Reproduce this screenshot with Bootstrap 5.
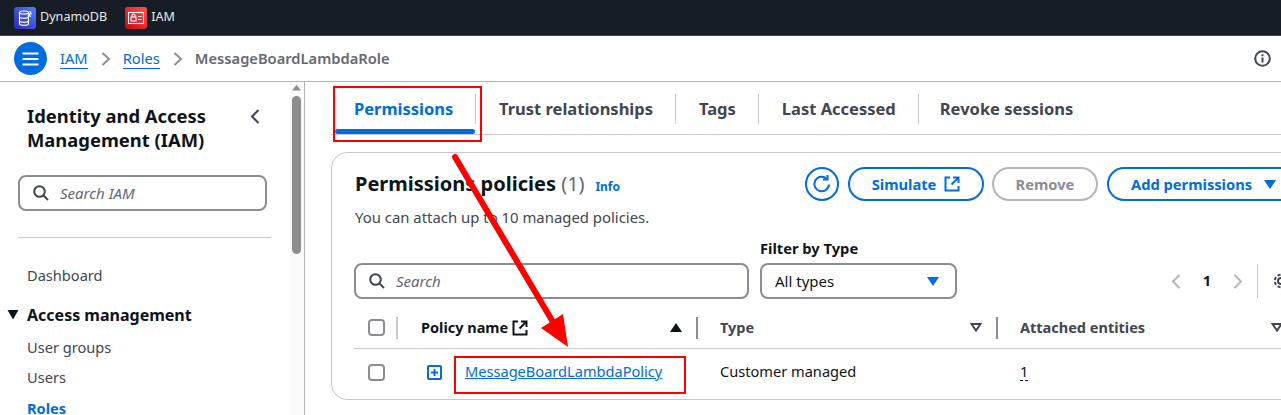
<!DOCTYPE html>
<html lang="en">
<head>
  <meta charset="UTF-8">
  <meta name="viewport" content="width=device-width, initial-scale=1.0">
  <title>MessageBoardLambdaRole | IAM</title>
  <link href="https://cdn.jsdelivr.net/npm/bootstrap@5.3.3/dist/css/bootstrap.min.css" rel="stylesheet">
  <style>
    html, body { height: 415px; overflow: hidden; }
    body { font-family: "Noto Sans", sans-serif; font-size: 14.6px; color: #0f141a; position: relative; background: #fff; }
    a { color: #006ce0; }
    .topbar { height: 36px; background: #161d26; border-bottom: 1px solid #424650; padding-left: 14px; color: #e8e8ea; font-size: 12.6px; }
    .svc { width: 22px; height: 22px; border-radius: 2px; }
    .crumbs { height: 46px; border-bottom: 1px solid #b4b4bb; padding: 0 10px 0 14px; font-size: 14.7px; }
    .menu-btn { width: 33px; height: 33px; border-radius: 50%; background: #006ce0; margin-right: 13px; }
    .crumb-link { line-height: 19px; text-decoration: none; border-bottom: 1px solid #006ce0; }
    .crumb-here { color: #656871; font-weight: 600; font-size: 14.7px; }
    .crumb-sep { margin: 0 12px 0 13px; }
    .shell { height: 333px; }
    .sidenav { width: 305px; border-right: 1px solid #b4b4bb; flex: none; overflow: hidden; }
    .sidenav-body { width: 290px; padding: 22px 0 0 18px; flex: none; }
    .sidenav-title { font-size: 18.4px; font-weight: 700; line-height: 24px; padding-left: 9px; width: 215px; }
    .sb-track { width: 14px; background: #fafafa; padding: 3px 3px 0 2px; flex: none; }
    .sb-thumb { width: 9px; height: 158px; background: #8d8d8d; border-radius: 5px; margin-top: 5px; }
    .field { border: 2px solid #8c8c94; border-radius: 8px; height: 36px; padding-left: 13px; background: #fff; }
    .field-hint { font-style: italic; color: #656871; font-size: 15px; margin-left: 11px; }
    .side-rule { border-top: 1px solid #c6c6cd; margin: 26px 19px 0 0; width: 253px; }
    .side-link { display: block; padding-left: 9px; color: #424650; font-size: 14.6px; line-height: 20px; }
    .side-head { font-size: 16px; font-weight: 700; line-height: 22px; margin: 19px 0 11px; position: relative; padding-left: 9px; }
    .side-caret { position: absolute; left: -11px; top: 6px; }
    .content { padding: 2px 0 0 26px; width: 1400px; flex: none; }
    .tabstrip { height: 51px; border-bottom: 1px solid #c6c6cd; width: 1000px; padding-left: 4px; }
    .tab-item { font-size: 16.5px; font-weight: 700; color: #424650; height: 30px; line-height: 30px; margin-top: 10px; border-right: 1px solid #c6c6cd; }
    .tab-on { color: #006ce0; position: relative; width: 141px; padding-left: 19px; }
    .tab-on::after { content: ""; position: absolute; left: 0; right: 0; top: 35px; height: 5px; background: #006ce0; border-radius: 3px; }
    .tab-plain { padding: 0 22px 0 23px; }
    .tab-last { border-right: 0; padding-left: 21px; }
    .policy-card { width: 1100px; height: 248px; margin-top: 17px; border: 1px solid #c6c6cd; border-radius: 16px; padding: 13px 0 0 22px; }
    .card-title-row { height: 36px; }
    .card-title-col { width: 451px; flex: none; padding-left: 1px; }
    .policy-title { font-size: 20px; font-weight: 700; line-height: 36px; }
    .policy-count { font-weight: 400; color: #656871; }
    .info-link { font-size: 12px; font-weight: 700; margin-left: 7px; text-decoration: none; }
    .pill { height: 34px; border: 2px solid #006ce0; border-radius: 20px; color: #006ce0; font-weight: 700; font-size: 14.7px; background: #fff; padding: 0; flex: none; }
    .pill-round { width: 34px; margin-right: 1px; }
    .pill-sim { width: 136px; }
    .pill-off { width: 106px; border-color: #b4b4bb; color: #8c8c94; margin-right: 1px; }
    .pill-add { width: 190px; padding-left: 22px; }
    .card-note { font-size: 14.9px; color: #424650; line-height: 20px; margin-top: 5px; padding-left: 1px; }
    .filter-row { margin-top: 11px; }
    .filter-label { font-weight: 700; font-size: 14.7px; line-height: 20px; margin-bottom: 5px; }
    .filter-search { width: 395px; margin-top: 25px; flex: none; }
    .filter-box { margin-left: 11px; flex: none; }
    .filter-select { width: 197px; justify-content: space-between; padding: 0 16px 0 13px; color: #0f141a; font-size: 15px; }
    .pager { margin: 25px 0 0 214px; height: 36px; flex: none; }
    .pager-num { font-weight: 700; width: 52px; text-align: center; }
    .pager-rule { width: 1px; height: 34px; background: #c6c6cd; margin: 0 15px 0 14px; }
    .grid-head { height: 50px; padding-top: 8px; border-bottom: 1px solid #c6c6cd; }
    .tick { width: 17px; height: 17px; border: 2px solid #8c8c94; border-radius: 4px; margin-left: 14px; flex: none; }
    .col-sep { width: 2px; height: 22px; background: #8c8c94; flex: none; }
    .col-sep-first { background: #c6c6cd; margin-left: 11px; }
    .head-cell { font-weight: 700; color: #424650; font-size: 14.5px; flex: none; justify-content: space-between; }
    .head-name { color: #0f141a; width: 298px; padding: 0 14px 0 23px; }
    .head-type { width: 298px; padding: 0 14px 0 22px; }
    .head-ent { width: 285px; padding: 0 0 0 22px; }
    .body-row { height: 49px; padding-bottom: 3px; }
    .plus-cell { margin-left: 42px; width: 38px; flex: none; }
    .policy-link { width: 255px; flex: none; }
    .ent-cell { line-height: 17px; border-bottom: 1px dashed #0f141a; }
    .type-cell { width: 300px; flex: none; }
    .markup { position: absolute; left: 0; top: 0; pointer-events: none; }
  </style>
</head>
<body>
  <div class="topbar d-flex align-items-center">
    <svg class="svc" viewBox="0 0 22 22"><defs><linearGradient id="ddb" x1="0" y1="1" x2="1" y2="0"><stop offset="0" stop-color="#2e27ad"/><stop offset="1" stop-color="#527fff"/></linearGradient></defs><rect width="22" height="22" rx="2" fill="url(#ddb)"/><g fill="none" stroke="#fff" stroke-width="1.2"><ellipse cx="10" cy="5.5" rx="4.5" ry="1.5"/><path d="M5.5 5.5v11c0 1 2 1.8 4.5 1.8s4.5-.8 4.5-1.8v-11M5.5 9.5c0 1 2 1.8 4.5 1.8s4.5-.8 4.5-1.8M5.5 13.5c0 1 2 1.8 4.5 1.8s4.5-.8 4.5-1.8M16 4l1 3h-2l1.500 3"/></g></svg>
    <span class="ms-1">DynamoDB</span>
    <svg class="svc" style="margin-left:18px" viewBox="0 0 22 22"><defs><linearGradient id="iam" x1="0" y1="1" x2="1" y2="0"><stop offset="0" stop-color="#bd0816"/><stop offset="1" stop-color="#ff5252"/></linearGradient></defs><rect width="22" height="22" rx="2" fill="url(#iam)"/><g fill="none" stroke="#fff" stroke-width="1.100"><rect x="3.500" y="5.500" width="15" height="11"/><rect x="6" y="10" width="5" height="4"/><path d="M7 10V8.500a1.500 1.500 0 0 1 3 0V10M13 9.500h3.500M13 12.500h3.500"/></g></svg>
    <span class="ms-1">IAM</span>
  </div>

  <div class="crumbs d-flex align-items-center">
    <button class="menu-btn border-0 p-0 d-flex align-items-center justify-content-center" aria-label="Menu">
      <svg width="17" height="14" viewBox="0 0 17 14" fill="none" stroke="#fff" stroke-width="2"><path d="M0.500 1.500h16M0.500 7h16M0.500 12.500h16"/></svg>
    </button>
    <a class="crumb-link" href="#">IAM</a>
    <svg class="crumb-sep" width="10" height="14" viewBox="0 0 10 14" fill="none" stroke="#8c8c94" stroke-width="2"><path d="M1.500 1l6.500 6-6.500 6"/></svg>
    <a class="crumb-link" href="#">Roles</a>
    <svg class="crumb-sep" width="10" height="14" viewBox="0 0 10 14" fill="none" stroke="#8c8c94" stroke-width="2"><path d="M1.500 1l6.500 6-6.500 6"/></svg>
    <span class="crumb-here">MessageBoardLambdaRole</span>
    <svg class="ms-auto" width="17" height="17" viewBox="0 0 17 17" fill="none" stroke="#424650" stroke-width="2"><circle cx="8.500" cy="8.500" r="7.300"/><path d="M8.500 7.500v5M8.500 4.200v2"/></svg>
  </div>

  <div class="shell d-flex overflow-hidden">
    <nav class="sidenav d-flex">
      <div class="sidenav-body">
        <div class="d-flex justify-content-between align-items-start">
          <div class="sidenav-title">Identity and Access Management (IAM)</div>
          <svg style="margin:5px 30px 0 0" width="10" height="15" viewBox="0 0 10 15" fill="none" stroke="#424650" stroke-width="2"><path d="M8.500 1L2 7.500 8.500 14"/></svg>
        </div>
        <div class="field d-flex align-items-center" style="width:249px;margin-top:23px">
          <svg width="16" height="16" viewBox="0 0 16 16" fill="none" stroke="#424650" stroke-width="2"><circle cx="6.500" cy="6.500" r="5.300"/><path d="M10.500 10.500l4.500 4.500"/></svg>
          <span class="field-hint">Search IAM</span>
        </div>
        <div class="side-rule"></div>
        <a class="side-link text-decoration-none" href="#" style="margin-top:27px">Dashboard</a>
        <div class="side-head">
          <svg class="side-caret" width="12" height="10" viewBox="0 0 12 10" fill="#0f141a"><path d="M0.500 0h11L6 9.500z"/></svg>
          Access management
        </div>
        <a class="side-link text-decoration-none" href="#">User groups</a>
        <a class="side-link text-decoration-none" href="#" style="margin-top:10px">Users</a>
        <a class="side-link text-decoration-none fw-bold" href="#" style="margin-top:11px;color:#006ce0">Roles</a>
      </div>
      <div class="sb-track">
        <svg class="d-block" width="9" height="6" viewBox="0 0 9 6" fill="#8d8d8d"><path d="M0 5.500L4.500 0 9 5.500z"/></svg>
        <div class="sb-thumb"></div>
      </div>
    </nav>

    <main class="content">
      <div class="tabstrip d-flex">
        <div class="tab-item tab-on">Permissions</div>
        <div class="tab-item tab-plain">Trust relationships</div>
        <div class="tab-item tab-plain">Tags</div>
        <div class="tab-item tab-plain">Last Accessed</div>
        <div class="tab-item tab-plain tab-last">Revoke sessions</div>
      </div>

      <section class="policy-card">
        <div class="card-title-row d-flex align-items-center">
          <div class="card-title-col">
            <span class="policy-title">Permissions policies <span class="policy-count">(1)</span></span>
            <a class="info-link" href="#">Info</a>
          </div>
          <div class="d-flex gap-2 align-items-center">
            <button class="pill pill-round d-flex align-items-center justify-content-center" aria-label="Refresh">
              <svg width="20" height="20" viewBox="0 0 20 20" fill="none" stroke="#006ce0" stroke-width="2"><path d="M17 10.500a7.300 7.300 0 1 1-2.500-6"/><path d="M15.500 1v4.500H11"/></svg>
            </button>
            <button class="pill pill-sim d-flex align-items-center justify-content-center gap-2">Simulate
              <svg width="16" height="16" viewBox="0 0 16 16" fill="none" stroke="#006ce0" stroke-width="2"><path d="M6 1.500H1.500v13h13V10M9 1.500h5.500V7M14.500 1.500L7.500 8.500"/></svg>
            </button>
            <button class="pill pill-off">Remove</button>
            <button class="pill pill-add d-flex align-items-center gap-2">Add permissions
              <svg class="ms-1" width="12" height="9" viewBox="0 0 12 9" fill="#006ce0"><path d="M0 0h12L6 9z"/></svg>
            </button>
          </div>
        </div>
        <div class="card-note">You can attach up to 10 managed policies.</div>

        <div class="filter-row d-flex">
          <div class="filter-search field d-flex align-items-center">
            <svg width="16" height="16" viewBox="0 0 16 16" fill="none" stroke="#424650" stroke-width="2"><circle cx="6.500" cy="6.500" r="5.300"/><path d="M10.500 10.500l4.500 4.500"/></svg>
            <span class="field-hint">Search</span>
          </div>
          <div class="filter-box">
            <div class="filter-label">Filter by Type</div>
            <div class="filter-select field d-flex align-items-center">
              <span>All types</span>
              <svg width="12" height="9" viewBox="0 0 12 9" fill="#006ce0"><path d="M0 0h12L6 9z"/></svg>
            </div>
          </div>
          <div class="pager d-flex align-items-center">
            <svg width="10" height="15" viewBox="0 0 10 15" fill="none" stroke="#b4b4bb" stroke-width="2"><path d="M8.500 1L2 7.500 8.500 14"/></svg>
            <span class="pager-num">1</span>
            <svg width="10" height="15" viewBox="0 0 10 15" fill="none" stroke="#b4b4bb" stroke-width="2"><path d="M1.500 1L8 7.500 1.500 14"/></svg>
            <span class="pager-rule"></span>
            <svg width="16" height="16" viewBox="0 0 16 16" fill="none" stroke="#424650" stroke-width="2"><circle cx="8" cy="8" r="3"/><circle cx="8" cy="8" r="6.200" stroke-dasharray="3 2"/></svg>
          </div>
        </div>

        <div class="grid-head d-flex align-items-center">
          <span class="tick"></span>
          <span class="col-sep col-sep-first"></span>
          <div class="head-cell head-name d-flex align-items-center">
            <span class="d-flex align-items-center gap-1">Policy name
              <svg width="16" height="16" viewBox="0 0 16 16" fill="none" stroke="#0f141a" stroke-width="2"><path d="M6 1.500H1.500v13h13V10M9 1.500h5.500V7M14.500 1.500L7.500 8.500"/></svg>
            </span>
            <svg width="12" height="9" viewBox="0 0 12 9" fill="#0f141a"><path d="M0 9h12L6 0z"/></svg>
          </div>
          <span class="col-sep"></span>
          <div class="head-cell head-type d-flex align-items-center">
            <span>Type</span>
            <svg width="12" height="9" viewBox="0 0 12 9" fill="none" stroke="#424650" stroke-width="2"><path d="M1.500 1h9L6 7.500z"/></svg>
          </div>
          <span class="col-sep"></span>
          <div class="head-cell head-ent d-flex align-items-center">
            <span>Attached entities</span>
            <svg width="12" height="9" viewBox="0 0 12 9" fill="none" stroke="#424650" stroke-width="2"><path d="M1.500 1h9L6 7.500z"/></svg>
          </div>
        </div>

        <div class="body-row d-flex align-items-center">
          <span class="tick"></span>
          <span class="plus-cell d-flex">
            <svg width="15" height="15" viewBox="0 0 15 15" fill="none" stroke="#006ce0" stroke-width="2"><rect x="1" y="1" width="13" height="13" rx="1"/><path d="M7.500 4v7M4 7.500h7"/></svg>
          </span>
          <a class="policy-link" href="#">MessageBoardLambdaPolicy</a>
          <span class="type-cell">Customer managed</span>
          <span class="ent-cell">1</span>
        </div>
      </section>
    </main>
  </div>

  <svg class="markup" width="1281" height="415" viewBox="0 0 1281 415" fill="none">
    <rect x="334" y="87" width="147" height="54" stroke="#f00" stroke-width="2"/>
    <rect x="455" y="357" width="230" height="36" stroke="#f00" stroke-width="2"/>
    <path d="M455 157L553 322" stroke="#f00" stroke-width="6" stroke-linecap="round"/>
    <path d="M541 328L563 314 568 347z" fill="#f00"/>
  </svg>
</body>
</html>
